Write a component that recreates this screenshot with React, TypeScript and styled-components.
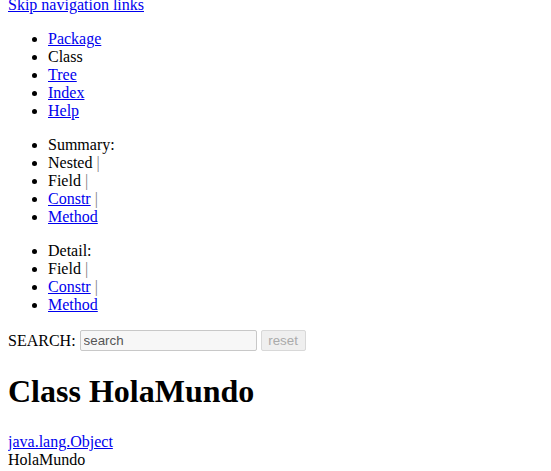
import styled, { createGlobalStyle } from 'styled-components'

const GlobalStyle = createGlobalStyle`
  body {
    margin: -4px 8px 8px;
    font-family: "Liberation Serif", "Times New Roman", serif;
    font-size: 16px;
    line-height: 18px;
    color: #000;
    background: #fff;
  }
  a {
    color: #0000ee;
  }
`

const NavList = styled.ul`
  margin: 16px 0;
  padding-left: 40px;
  list-style: disc;
`

const Sep = styled.span`
  color: #808080;
`

const SearchRow = styled.div`
  display: flex;
  align-items: center;
  height: 21px;
  margin-top: 16px;
`

const SearchLabel = styled.label`
  margin-right: 4px;
`

const SearchInput = styled.input`
  box-sizing: border-box;
  width: 177px;
  height: 21px;
  padding: 1px 3px;
  border: 1px solid #c8c8c8;
  border-radius: 2px;
  background: #f7f7f7;
  font-family: "Liberation Sans", Arial, sans-serif;
  font-size: 13.33px;
  color: #555;
  outline: none;
`

const ResetButton = styled.button`
  box-sizing: border-box;
  height: 21px;
  width: 45px;
  margin-left: 4px;
  padding: 1px 6px;
  border: 1px solid #d8d8d8;
  border-radius: 2px;
  background: #efefef;
  font-family: "Liberation Sans", Arial, sans-serif;
  font-size: 13.33px;
  color: #aaa;
`

const Title = styled.h1`
  font-size: 32px;
  line-height: 37px;
  font-weight: bold;
  margin: 22px 0 23px;
`

const Tree = styled.div`
  line-height: 18px;
`

const App = () => {
  return (
    <>
      <GlobalStyle />
      <a href="#skip">Skip navigation links</a>
      <NavList>
        <li><a href="#p">Package</a></li>
        <li>Class</li>
        <li><a href="#t">Tree</a></li>
        <li><a href="#i">Index</a></li>
        <li><a href="#h">Help</a></li>
      </NavList>
      <NavList>
        <li>Summary:&nbsp;</li>
        <li>Nested&nbsp;<Sep>|</Sep>&nbsp;</li>
        <li>Field&nbsp;<Sep>|</Sep>&nbsp;</li>
        <li><a href="#c">Constr</a>&nbsp;<Sep>|</Sep>&nbsp;</li>
        <li><a href="#m">Method</a></li>
      </NavList>
      <NavList>
        <li>Detail:&nbsp;</li>
        <li>Field&nbsp;<Sep>|</Sep>&nbsp;</li>
        <li><a href="#c">Constr</a>&nbsp;<Sep>|</Sep>&nbsp;</li>
        <li><a href="#m">Method</a></li>
      </NavList>
      <SearchRow>
        <SearchLabel htmlFor="search">SEARCH:</SearchLabel>
        <SearchInput id="search" type="text" defaultValue="search" />
        <ResetButton type="reset" disabled>reset</ResetButton>
      </SearchRow>
      <Title>Class HolaMundo</Title>
      <Tree>
        <div><a href="#o">java.lang.Object</a></div>
        <div>HolaMundo</div>
      </Tree>
    </>
  )
}

export default App
